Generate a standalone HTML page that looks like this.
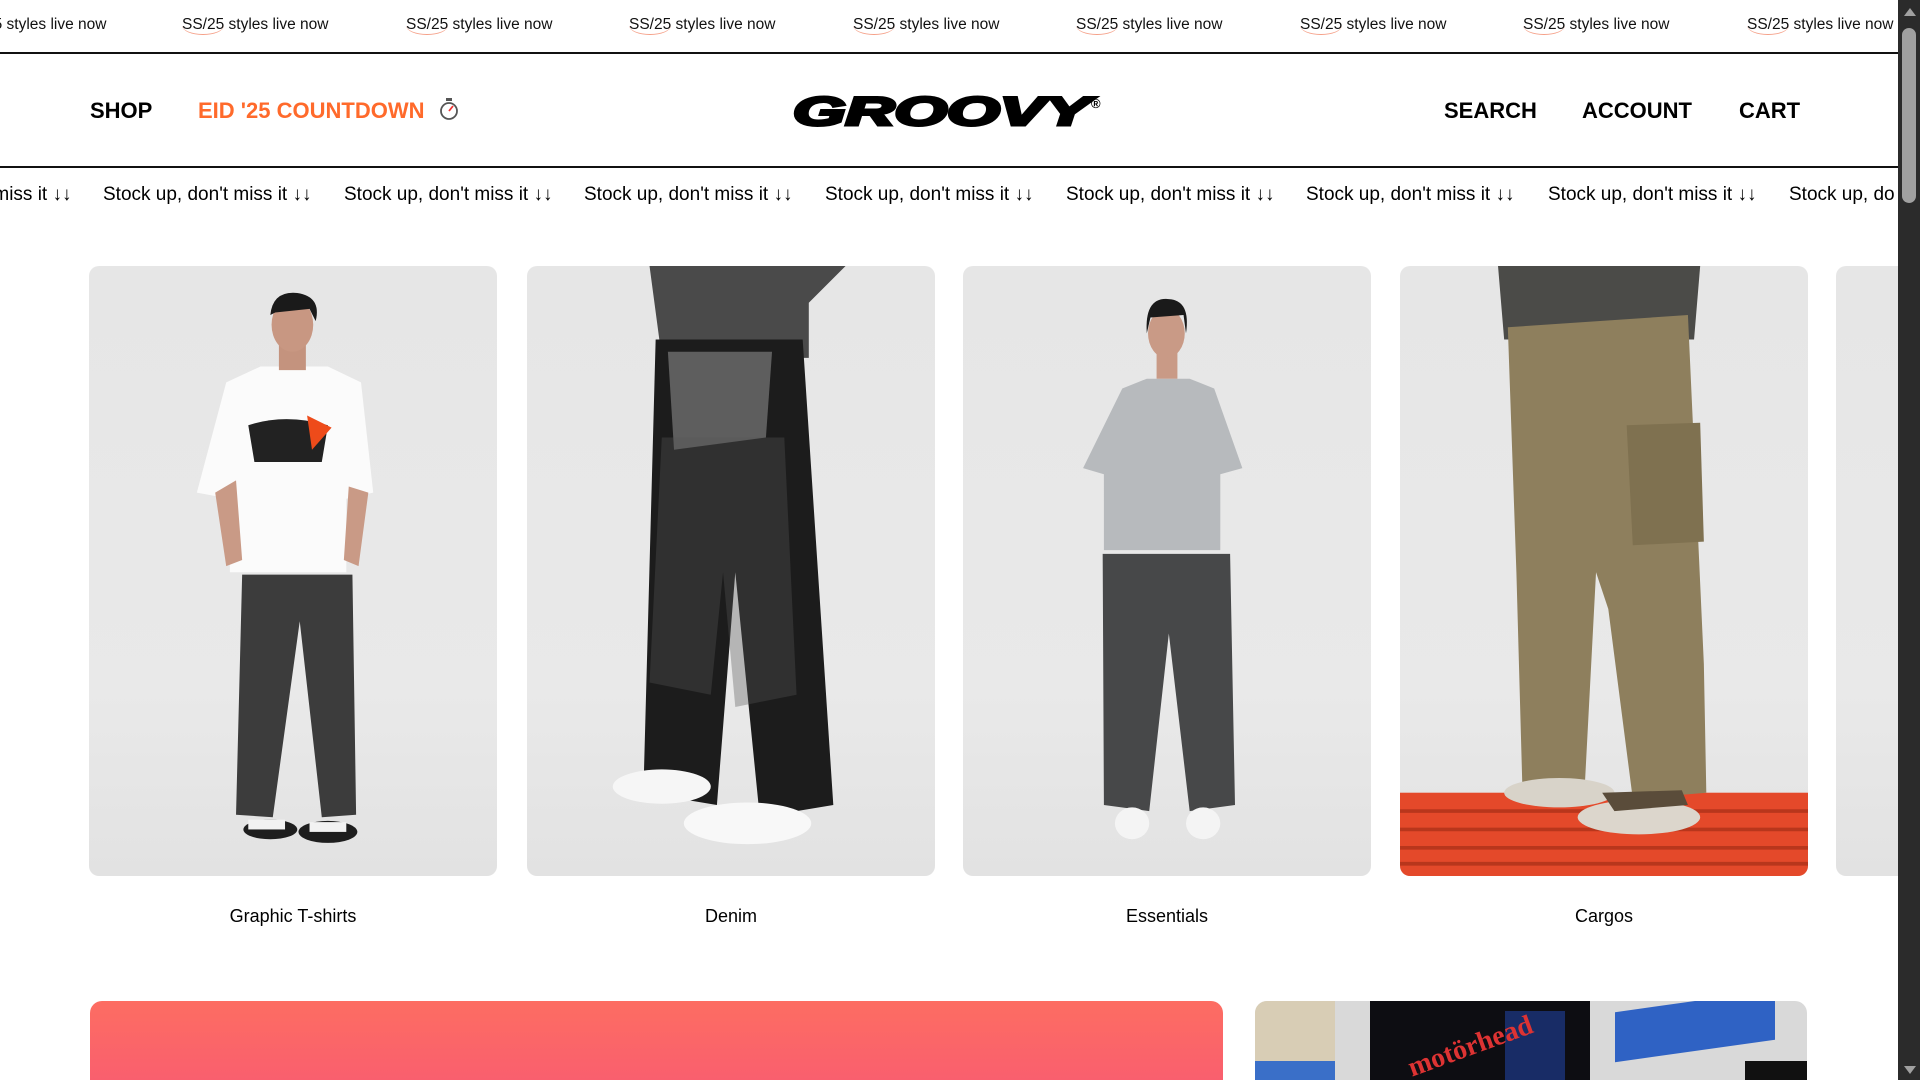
<!DOCTYPE html>
<html><head><meta charset="utf-8"><style>
*{margin:0;padding:0;box-sizing:border-box}
html,body{width:1920px;height:1080px;overflow:hidden;background:#fff;font-family:"Liberation Sans",sans-serif;color:#000;position:relative}
.abs{position:absolute}
.tk{position:absolute;top:16px;font-size:15.5px;white-space:nowrap;color:#111}
.tk u{text-decoration:none;border-bottom:1.5px solid #f5a088;border-radius:0 0 50% 50%;padding-bottom:1px}
.st{position:absolute;top:184px;font-size:19px;white-space:nowrap;color:#000}
.nav{position:absolute;top:98px;font-size:22px;font-weight:bold}
.card{position:absolute;top:266px;width:408px;height:610px;border-radius:10px;overflow:hidden;background:linear-gradient(#e6e6e6,#e9e9e9 70%,#e2e2e2)}
.card svg{width:100%;height:100%;display:block}
.lab{position:absolute;top:906px;width:408px;text-align:center;font-size:18px}
</style></head><body>
<div class="tk" style="left:-40px">SS/25 styles live now</div>
<div class="tk" style="left:182px"><u>SS/25</u> styles live now</div>
<div class="tk" style="left:406px"><u>SS/25</u> styles live now</div>
<div class="tk" style="left:629px"><u>SS/25</u> styles live now</div>
<div class="tk" style="left:853px"><u>SS/25</u> styles live now</div>
<div class="tk" style="left:1076px"><u>SS/25</u> styles live now</div>
<div class="tk" style="left:1300px"><u>SS/25</u> styles live now</div>
<div class="tk" style="left:1523px"><u>SS/25</u> styles live now</div>
<div class="tk" style="left:1747px"><u>SS/25</u> styles live now</div>
<div class="abs" style="left:0;top:52px;width:1898px;height:2px;background:#111"></div>

<div class="nav" style="left:90px">SHOP</div>
<div class="nav" style="left:198px;color:#ff6a2b">EID '25 COUNTDOWN</div>
<svg class="abs" style="left:439px;top:98px" width="20" height="22" viewBox="0 0 20 22"><rect x="7" y="0" width="6" height="3" fill="#555"/><circle cx="10" cy="13" r="8" fill="#fff" stroke="#555" stroke-width="1.8"/><line x1="10" y1="13" x2="14" y2="8" stroke="#e33" stroke-width="1.8"/></svg>
<svg class="abs" style="left:790px;top:92px" width="320" height="40" viewBox="0 0 320 40"><text x="3" y="33" font-family="Liberation Sans" font-weight="bold" font-style="italic" font-size="40" textLength="297" lengthAdjust="spacingAndGlyphs" stroke="#000" stroke-width="3">GROOVY</text><text x="301" y="16" font-family="Liberation Sans" font-weight="bold" font-size="13">®</text></svg>
<div class="nav" style="left:1444px">SEARCH</div>
<div class="nav" style="left:1582px">ACCOUNT</div>
<div class="nav" style="left:1739px">CART</div>
<div class="abs" style="left:0;top:166px;width:1898px;height:2px;background:#111"></div>

<div class="st" style="left:-137px">Stock up, don't miss it ↓↓</div>
<div class="st" style="left:103px">Stock up, don't miss it ↓↓</div>
<div class="st" style="left:344px">Stock up, don't miss it ↓↓</div>
<div class="st" style="left:584px">Stock up, don't miss it ↓↓</div>
<div class="st" style="left:825px">Stock up, don't miss it ↓↓</div>
<div class="st" style="left:1066px">Stock up, don't miss it ↓↓</div>
<div class="st" style="left:1306px">Stock up, don't miss it ↓↓</div>
<div class="st" style="left:1548px">Stock up, don't miss it ↓↓</div>
<div class="st" style="left:1789px">Stock up, do</div>

<div class="card" style="left:89px"><svg viewBox="0 0 333 498" preserveAspectRatio="none">
<path d="M120 448 L125 252 L215 252 L218 448 L190 450 L172 290 L150 450 Z" fill="#3c3c3c"/>
<ellipse cx="148" cy="460" rx="22" ry="8" fill="#1e1e1e"/><ellipse cx="195" cy="462" rx="24" ry="9" fill="#1e1e1e"/>
<rect x="130" y="452" width="30" height="8" fill="#f2f2f2"/><rect x="180" y="454" width="30" height="8" fill="#f2f2f2"/>
<path d="M112 95 L140 82 L195 82 L222 95 L232 185 L210 190 L210 250 L115 250 L115 190 L88 185 Z" fill="#fbfbfb"/>
<path d="M120 175 L103 185 L112 245 L125 240 Z M212 180 L228 185 L220 245 L208 240 Z" fill="#c99a86"/>
<rect x="155" y="60" width="22" height="25" fill="#c4937e"/>
<ellipse cx="166" cy="48" rx="17" ry="22" fill="#c89782"/><path d="M148 40 Q150 20 170 22 Q190 25 185 45 L180 35 L152 38 Z" fill="#1a1a1a"/>
<path d="M130 130 Q160 120 195 130 L190 160 L135 160 Z" fill="#222"/><path d="M178 122 L198 132 L182 150 Z" fill="#ee4b1a"/>
</svg></div>
<div class="card" style="left:527px"><svg viewBox="0 0 333 498" preserveAspectRatio="none">
<path d="M100 0 L260 0 L230 30 L230 75 L110 75 Z" fill="#4a4a4a"/>
<path d="M105 60 L225 60 L250 440 L190 450 L170 250 L155 440 L95 430 Z" fill="#1c1c1c"/>
<path d="M115 70 L200 70 L195 140 L120 150 Z" fill="#8a8a8a" opacity=".6"/>
<path d="M110 140 L210 140 L220 350 L170 360 L160 250 L150 350 L100 340 Z" fill="#555" opacity=".35"/>
<ellipse cx="110" cy="425" rx="40" ry="14" fill="#f6f6f6"/><ellipse cx="180" cy="455" rx="52" ry="17" fill="#f8f8f8"/>
</svg></div>
<div class="card" style="left:963px"><svg viewBox="0 0 333 498" preserveAspectRatio="none">
<path d="M114 235 L218 235 L222 440 L185 445 L168 300 L152 445 L115 440 Z" fill="#474849"/>
<path d="M130 100 L150 92 L185 92 L205 100 L228 165 L210 170 L210 232 L115 232 L115 170 L98 165 Z" fill="#b7babd"/>
<rect x="158" y="62" width="17" height="30" fill="#c99a86"/>
<ellipse cx="166" cy="55" rx="15" ry="20" fill="#c99a86"/><path d="M150 55 Q148 25 168 27 Q186 28 182 55 L180 40 L153 42 Z" fill="#1a1a1a"/>
<ellipse cx="138" cy="455" rx="14" ry="13" fill="#f4f4f4"/><ellipse cx="196" cy="455" rx="14" ry="13" fill="#f4f4f4"/>
</svg></div>
<div class="card" style="left:1400px"><svg viewBox="0 0 333 498" preserveAspectRatio="none">
<rect x="0" y="430" width="333" height="68" fill="#e4492a"/>
<path d="M0 445 H333 M0 460 H333 M0 475 H333 M0 488 H333" stroke="#b8361c" stroke-width="3"/>
<path d="M80 0 L245 0 L240 60 L85 60 Z" fill="#4b4b48"/>
<path d="M88 50 L235 40 L248 325 L250 430 L190 435 L170 280 L160 250 L150 440 L100 430 L95 250 Z" fill="#8e7f5d"/>
<path d="M185 130 L245 128 L248 225 L190 228 Z" fill="#7f7150"/>
<ellipse cx="130" cy="430" rx="45" ry="12" fill="#d8d3c9"/><ellipse cx="195" cy="450" rx="50" ry="14" fill="#dcd6cc"/>
<path d="M165 430 L230 428 L235 440 L175 445Z" fill="#5a4c3a"/>
</svg></div>
<div class="card" style="left:1836px;width:62px;border-radius:10px 0 0 10px"></div>

<div class="lab" style="left:89px">Graphic T-shirts</div>
<div class="lab" style="left:527px">Denim</div>
<div class="lab" style="left:963px">Essentials</div>
<div class="lab" style="left:1400px">Cargos</div>

<div class="abs" style="left:90px;top:1001px;width:1133px;height:79px;border-radius:12px 12px 0 0;background:linear-gradient(#fd6d62,#f95f6e)"></div>
<div class="abs" style="left:1255px;top:1001px;width:552px;height:79px;border-radius:12px 12px 0 0;overflow:hidden;background:#d9d9d9">
<div class="abs" style="left:0;top:0;width:80px;height:79px;background:#d8cdb5"></div>
<div class="abs" style="left:0;top:60px;width:80px;height:19px;background:#3a6fc8"></div>
<div class="abs" style="left:115px;top:0;width:220px;height:79px;background:#0d0d12"></div>
<div class="abs" style="left:250px;top:10px;width:60px;height:69px;background:#1e3a8a;opacity:.7"></div>
<div class="abs" style="left:150px;top:30px;width:130px;height:30px;color:#d33;font-family:'Liberation Serif',serif;font-weight:bold;font-size:28px;transform:rotate(-20deg);white-space:nowrap">motörhead</div>
<div class="abs" style="left:360px;top:0;width:160px;height:50px;background:#2f62c4;transform:skewY(-8deg)"></div>
<div class="abs" style="left:490px;top:60px;width:62px;height:19px;background:#111"></div>
</div>

<div class="abs" style="left:1898px;top:0;width:22px;height:1080px;background:#2b2b2b"></div>
<div class="abs" style="left:1902px;top:28px;width:14px;height:175px;border-radius:7px;background:#a0a0a0"></div>
<div class="abs" style="left:1904px;top:8px;width:0;height:0;border-left:6px solid transparent;border-right:6px solid transparent;border-bottom:8px solid #a0a0a0"></div>
<div class="abs" style="left:1904px;top:1066px;width:0;height:0;border-left:6px solid transparent;border-right:6px solid transparent;border-top:8px solid #a0a0a0"></div>
</body></html>
